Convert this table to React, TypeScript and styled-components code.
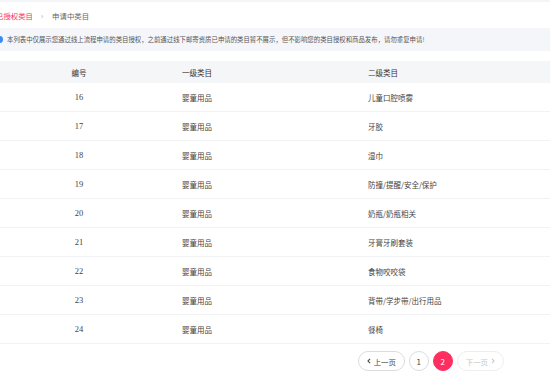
import React from 'react';
import styled, { createGlobalStyle } from 'styled-components';

const GlobalStyle = createGlobalStyle`
  html, body {
    margin: 0;
    padding: 0;
    background: #fff;
    font-family: "Noto Sans CJK SC", "Noto Sans", sans-serif;
  }
`;

const Page = styled.div`
  width: 550px;
  height: 385px;
  overflow: hidden;
  border-top: 2px solid #f4f5f7;
  box-sizing: border-box;
`;

const Tabs = styled.div`
  display: flex;
  align-items: center;
  height: 26px;
  margin-left: -4px;
  font-size: 7.4px;
`;

const Tab = styled.span<{ $active?: boolean }>`
  color: ${(p) => (p.$active ? '#f5325c' : '#666')};
`;

const Sep = styled.span`
  color: #999;
  font-size: 7px;
  margin: 0 9px 0 8px;
`;

const Notice = styled.div`
  display: flex;
  align-items: center;
  height: 23px;
  background: #f5f6fa;
  font-size: 6.4px;
  color: #555;
`;

const InfoDot = styled.span`
  width: 7px;
  height: 7px;
  border-radius: 50%;
  background: #3c8cf0;
  margin-left: -4px;
  margin-right: 4px;
  flex-shrink: 0;
`;

const Table = styled.div`
  margin-top: 10px;
`;

const Row = styled.div<{ $head?: boolean }>`
  display: grid;
  grid-template-columns: 158px 186px 1fr;
  align-items: center;
  height: ${(p) => (p.$head ? '22px' : '28px')};
  background: ${(p) => (p.$head ? '#f5f6f8' : '#fff')};
  border-bottom: ${(p) => (p.$head ? 'none' : '1px solid #f1f2f4')};
  font-size: 7.5px;
  color: ${(p) => (p.$head ? '#333' : '#444')};
`;

const NumCell = styled.div<{ $serif?: boolean }>`
  text-align: center;
  font-family: ${(p) => (p.$serif ? '"Liberation Serif", serif' : 'inherit')};
  font-size: ${(p) => (p.$serif ? '8.5px' : 'inherit')};
`;

const Cell = styled.div`
  padding-left: 24px;
`;

const Pager = styled.div`
  display: flex;
  justify-content: flex-end;
  align-items: center;
  gap: 4px;
  padding: 7px 46px 0 0;
`;

const PageBtn = styled.div<{ $active?: boolean; $disabled?: boolean; $wide?: boolean }>`
  height: 20px;
  min-width: 20px;
  padding: ${(p) => (p.$wide ? '0 8px' : '0')};
  box-sizing: border-box;
  border-radius: 10px;
  display: flex;
  align-items: center;
  justify-content: center;
  gap: 3px;
  font-size: 7.4px;
  border: 1px solid ${(p) => (p.$active ? '#ff2e5f' : p.$disabled ? '#eeeeee' : '#dcdcdc')};
  background: ${(p) => (p.$active ? '#ff2e5f' : '#fff')};
  color: ${(p) => (p.$active ? '#fff' : p.$disabled ? '#c8c8c8' : '#444')};
`;

const Num = styled.span`
  font-size: 8px;
`;

const Chevron = ({ dir }: { dir: 'l' | 'r' }) => (
  <svg width="4" height="6" viewBox="0 0 4 6">
    <path
      d={dir === 'l' ? 'M3 0.8 L1 3 L3 5.2' : 'M1 0.8 L3 3 L1 5.2'}
      fill="none"
      stroke="currentColor"
      strokeWidth="1.1"
    />
  </svg>
);

const rows = [
  ['16', '儿童口腔喷雾'],
  ['17', '牙胶'],
  ['18', '湿巾'],
  ['19', '防撞/提醒/安全/保护'],
  ['20', '奶瓶/奶瓶相关'],
  ['21', '牙膏牙刷套装'],
  ['22', '食物咬咬袋'],
  ['23', '背带/学步带/出行用品'],
  ['24', '餐椅'],
];

export default function App() {
  return (
    <Page>
      <GlobalStyle />
      <Tabs>
        <Tab $active>已授权类目</Tab>
        <Sep>›</Sep>
        <Tab>申请中类目</Tab>
      </Tabs>
      <Notice>
        <InfoDot />
        本列表中仅展示您通过线上流程申请的类目授权，之前通过线下邮寄资质已申请的类目暂不展示，但不影响您的类目授权和商品发布，请勿重复申请!
      </Notice>
      <Table>
        <Row $head>
          <NumCell>编号</NumCell>
          <Cell>一级类目</Cell>
          <Cell>二级类目</Cell>
        </Row>
        {rows.map(([n, sub]) => (
          <Row key={n}>
            <NumCell $serif>{n}</NumCell>
            <Cell>婴童用品</Cell>
            <Cell>{sub}</Cell>
          </Row>
        ))}
      </Table>
      <Pager>
        <PageBtn $wide>
          <Chevron dir="l" />
          上一页
        </PageBtn>
        <PageBtn>
          <Num>1</Num>
        </PageBtn>
        <PageBtn $active>
          <Num>2</Num>
        </PageBtn>
        <PageBtn $wide $disabled>
          下一页
          <Chevron dir="r" />
        </PageBtn>
      </Pager>
    </Page>
  );
}
